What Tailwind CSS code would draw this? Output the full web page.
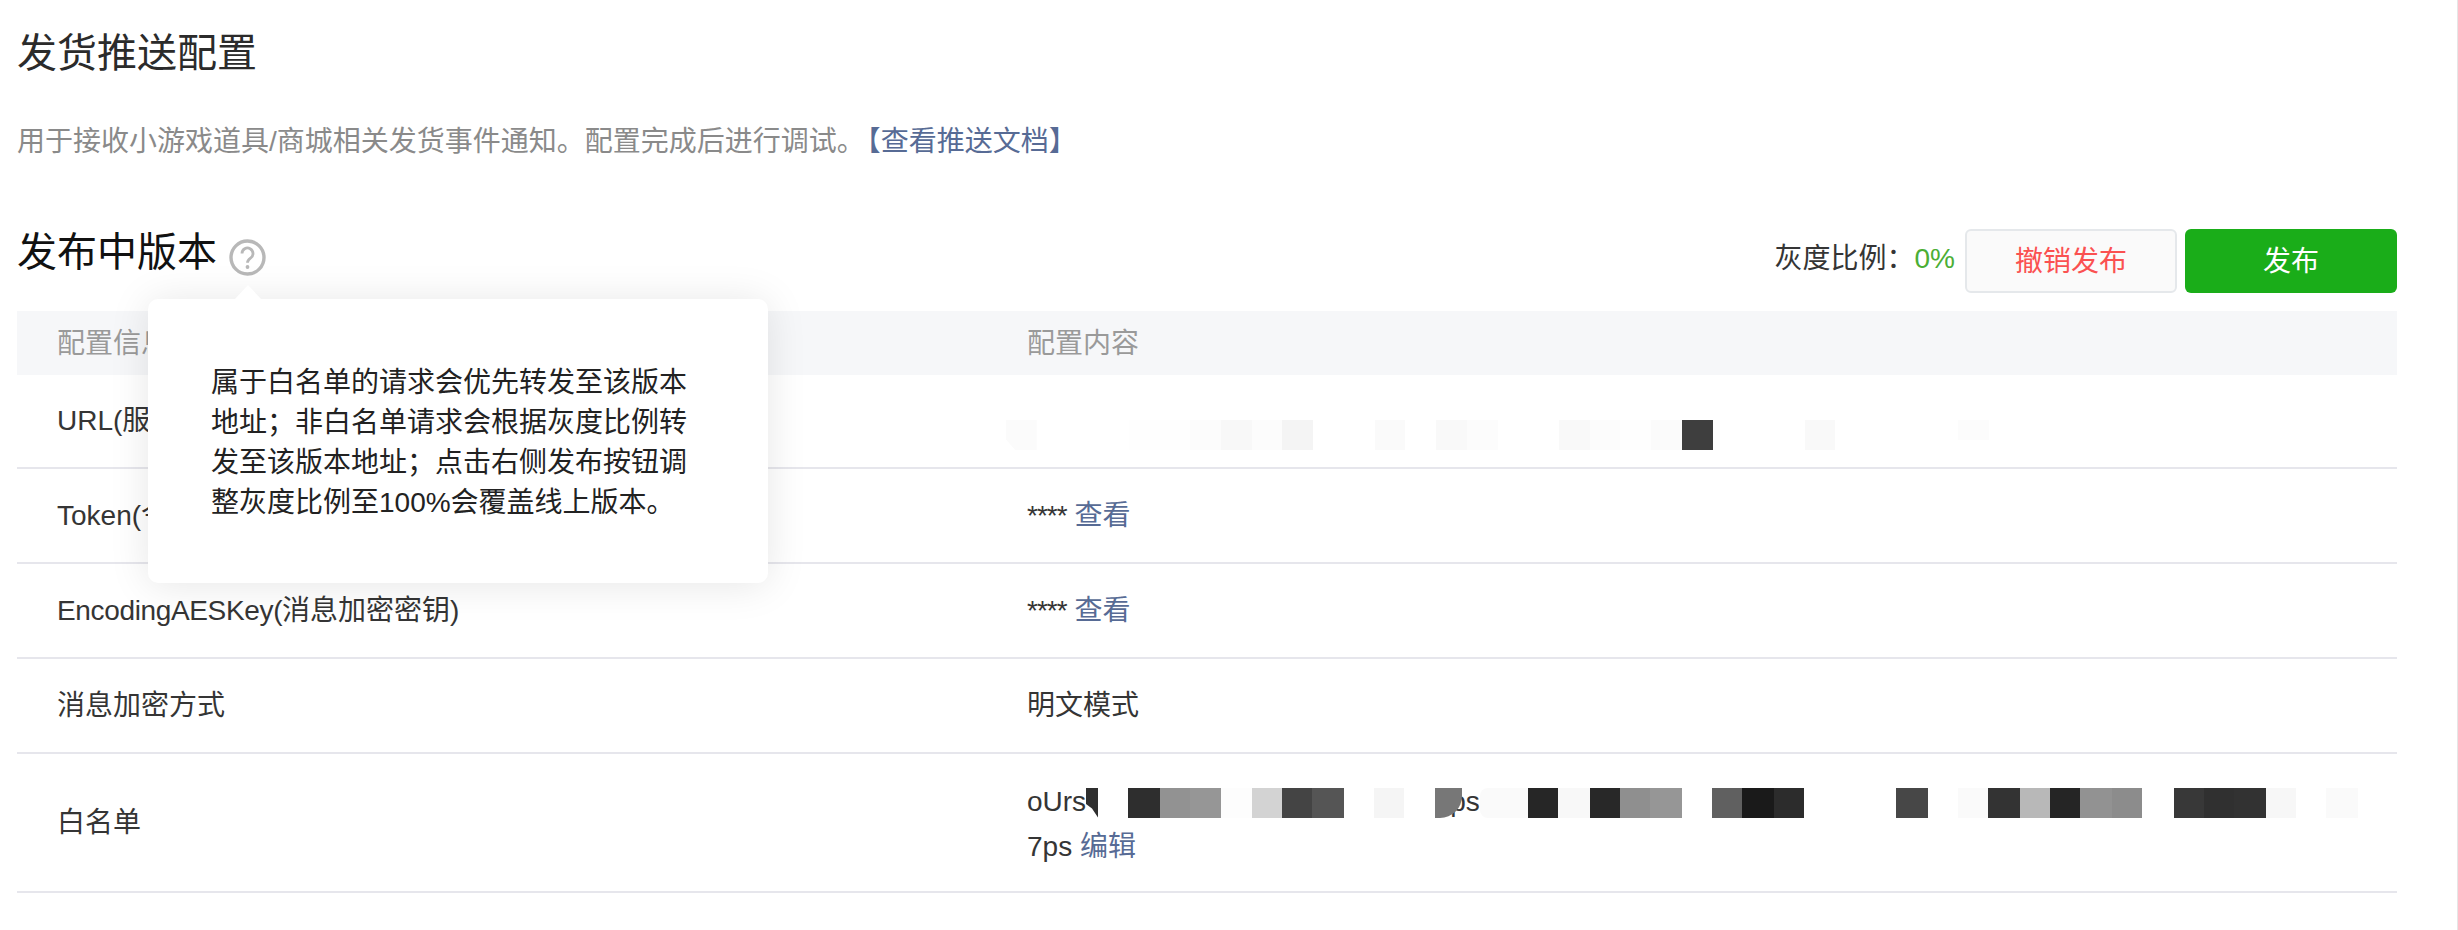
<!DOCTYPE html>
<html lang="zh-CN">
<head>
  <meta charset="UTF-8">
  <title>发货推送配置</title>
  <script src="https://cdn.jsdelivr.net/npm/@tailwindcss/browser@4"></script>
</head>
<body class="bg-white font-['Liberation_Sans','Noto_Sans_CJK_SC',sans-serif] text-[28px] text-[#353535]">
  <div class="relative min-h-[930px] pl-[17px] pr-[60px] pt-[25px] border-r border-[#e6e6e6]">
    <h1 class="text-[40px] leading-[56px] text-[#2b2b2b]">发货推送配置</h1>
    <p class="mt-[41px] leading-[40px] text-[#8a8a8a]">用于接收小游戏道具/商城相关发货事件通知。配置完成后进行调试。<a class="ml-[2px] text-[#576b95]">【查看推送文档】</a></p>

    <div class="mt-[67px] flex justify-between items-start">
      <div class="flex items-start">
        <h2 class="text-[40px] leading-[46px] text-[#111]">发布中版本</h2>
        <svg class="ml-[12px] mt-[10px]" width="37" height="37" viewBox="0 0 37 37" fill="none" stroke="#b8b8b8" stroke-width="3.4">
          <circle cx="18.5" cy="18.5" r="16.5"/>
          <path d="M13 14.5a5.5 5.5 0 1 1 8.5 4.6c-2 1.3-3 2.3-3 4.6" stroke-width="2.8"/>
          <circle cx="18.5" cy="28" r="1.9" fill="#b8b8b8" stroke="none"/>
        </svg>
      </div>
      <div class="flex items-start">
        <span class="leading-[60px]">灰度比例&#xFF1A;</span>
        <span class="leading-[60px] text-[#4bae35]">0%</span>
        <button class="ml-[10px] w-[212px] h-[64px] rounded-[6px] border-2 border-[#e5e8eb] bg-[#fafafa] text-[#fa5151] pt-[2px]">撤销发布</button>
        <button class="ml-[8px] w-[212px] h-[64px] rounded-[6px] bg-[#1aad19] text-white pt-[2px]">发布</button>
      </div>
    </div>

    <div class="mt-[18px]">
      <div class="flex items-center h-[64px] pt-[2px] bg-[#f6f7f9] text-[#9a9a9a]">
        <div class="w-[971px] pl-[40px]">配置信息</div>
        <div class="pl-[39px]">配置内容</div>
      </div>

      <div class="flex items-center h-[94px] border-b-2 border-[#e6e6ec]">
        <div class="w-[971px] pl-[40px]">URL(服务器地址)</div>
        <div class="self-start mt-[45px] ml-[18px] flex h-[30px] [&>span]:w-[30.72px] [&>span]:shrink-0">
          <span class="bg-[#fbfbfb] [clip-path:polygon(0_0,100%_0,100%_100%,30%_100%,0_65%)]"></span>
          <span></span><span></span><span></span>
          <span class="bg-[#fefefe]"></span>
          <span class="bg-[#fefefe]"></span>
          <span class="bg-[#fcfcfc]"></span>
          <span class="bg-[#f8f8f8]"></span>
          <span class="bg-[#fcfcfc]"></span>
          <span class="bg-[#f4f4f4]"></span>
          <span></span><span></span>
          <span class="bg-[#fafafa]"></span>
          <span></span>
          <span class="bg-[#f9f9f9]"></span>
          <span class="bg-[#fcfcfc]"></span>
          <span></span><span></span>
          <span class="bg-[#f9f9f9]"></span>
          <span class="bg-[#fcfcfc]"></span>
          <span class="bg-[#fefefe]"></span>
          <span class="bg-[#fbfbfb]"></span>
          <span class="bg-[#3e3e3e]"></span>
          <span></span><span></span><span></span>
          <span class="bg-[#f9f9f9]"></span>
          <span></span><span></span><span></span><span></span>
          <span class="bg-[#fcfcfc] h-[20px]"></span>
        </div>
      </div>

      <div class="flex items-center h-[95px] border-b-2 border-[#e6e6ec]">
        <div class="w-[971px] pl-[40px]">Token(令牌)</div>
        <div class="pl-[39px]"><span class="tracking-[-1px]">****</span> <a class="text-[#576b95]">查看</a></div>
      </div>

      <div class="flex items-center h-[95px] border-b-2 border-[#e6e6ec]">
        <div class="w-[971px] pl-[40px]"><span class="tracking-[-0.35px]">EncodingAESKey(</span>消息加密密钥)</div>
        <div class="pl-[39px]"><span class="tracking-[-1px]">****</span> <a class="text-[#576b95]">查看</a></div>
      </div>

      <div class="flex items-center h-[95px] border-b-2 border-[#e6e6ec]">
        <div class="w-[971px] pl-[40px]">消息加密方式</div>
        <div class="pl-[39px]">明文模式</div>
      </div>

      <div class="flex items-center h-[139px] border-b-2 border-[#e6e6ec]">
        <div class="w-[971px] pl-[40px]">白名单</div>
        <div class="pl-[39px]">
          <div class="relative pt-[3px] leading-[42px]">
            <div class="flex"><span>oUrs</span><span class="ml-[364px]">ps</span></div>
            <div class="mt-[3px]">7ps <a class="text-[#576b95]">编辑</a></div>
            <!-- mosaic lying over the openid -->
            <div class="absolute left-[59px] top-[10px] flex h-[30px] [&>span]:shrink-0">
              <span class="w-[12px] bg-[#2f2f2f] [clip-path:polygon(0_0,100%_0,100%_100%,50%_70%,0_55%)]"></span>
              <span class="w-[30px] bg-white"></span>
              <span class="w-[31.5px] bg-[#2e2e2e]"></span>
              <span class="w-[30.5px] bg-[#929292]"></span>
              <span class="w-[30.5px] bg-[#969696]"></span>
              <span class="w-[31.5px] bg-[#fdfdfd]"></span>
              <span class="w-[30px] bg-[#d3d3d3]"></span>
              <span class="w-[30px] bg-[#444444]"></span>
              <span class="w-[32px] bg-[#555555]"></span>
              <span class="w-[30px] bg-white"></span>
              <span class="w-[30px] bg-[#f5f5f5]"></span>
              <span class="w-[31px] bg-white"></span>
              <span class="w-[27px] bg-[#777777] rounded-br-[22px]"></span>
              <span class="w-[18px]"></span>
              <span class="w-[48px] bg-[#fafafa] rounded-l-[8px]"></span>
              <span class="w-[30px] bg-[#262626]"></span>
              <span class="w-[32px] bg-[#f8f8f8]"></span>
              <span class="w-[30px] bg-[#282828]"></span>
              <span class="w-[30px] bg-[#8f8f8f]"></span>
              <span class="w-[32px] bg-[#969696]"></span>
              <span class="w-[30px] bg-white"></span>
              <span class="w-[30px] bg-[#606060]"></span>
              <span class="w-[32px] bg-[#1a1a1a]"></span>
              <span class="w-[30px] bg-[#2c2c2c]"></span>
              <span class="w-[92px]"></span>
              <span class="w-[32px] bg-[#474747]"></span>
              <span class="w-[30px]"></span>
              <span class="w-[30px] bg-[#fafafa]"></span>
              <span class="w-[32px] bg-[#333333]"></span>
              <span class="w-[30px] bg-[#b8b8b8]"></span>
              <span class="w-[30px] bg-[#252525]"></span>
              <span class="w-[32px] bg-[#929292]"></span>
              <span class="w-[30px] bg-[#8c8c8c]"></span>
              <span class="w-[32px] bg-white"></span>
              <span class="w-[30px] bg-[#383838]"></span>
              <span class="w-[30px] bg-[#303030]"></span>
              <span class="w-[32px] bg-[#323232]"></span>
              <span class="w-[30px] bg-[#f7f7f7]"></span>
              <span class="w-[30px] bg-white"></span>
              <span class="w-[32px] bg-[#fafafa]"></span>
            </div>
          </div>
        </div>
      </div>
    </div>

    <!-- help tooltip -->
    <div class="absolute left-[148px] top-[299px] w-[620px] h-[284px] flex items-center px-[63px] pt-[3px] bg-white rounded-[10px] shadow-[0_2px_40px_rgba(0,0,0,0.1)] leading-[40px] text-[#222]">
      <div class="absolute left-[87px] top-[-14px] w-0 h-0 border-x-[13px] border-b-[14px] border-x-transparent border-b-white"></div>
      <p>属于白名单的请求会优先转发至该版本地址&#xFF1B;非白名单请求会根据灰度比例转发至该版本地址&#xFF1B;点击右侧发布按钮调整灰度比例至100%会覆盖线上版本。</p>
    </div>
  </div>
</body>
</html>
